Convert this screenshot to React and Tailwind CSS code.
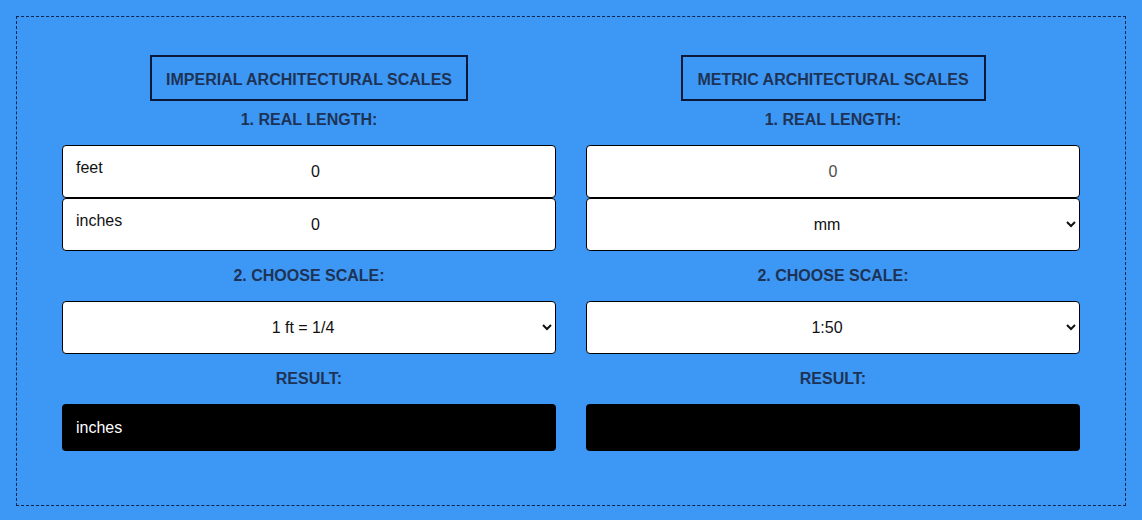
import React from "react";

const font = { fontFamily: '"Liberation Sans", Arial, sans-serif' };

function Heading({ children, className = "" }) {
  return (
    <div className={"text-[16px] leading-[18px] font-bold text-[#1d3355] text-center " + className}>
      {children}
    </div>
  );
}

function LabeledInput({ label, value }) {
  return (
    <div className="relative w-full h-[53px] bg-white border border-black rounded-[4px]">
      <span className="absolute left-[13px] top-[13px] text-[16px] leading-[18px] text-[#111]">{label}</span>
      <input
        readOnly
        value={value}
        className="w-full h-full pl-[13px] text-center text-[16px] text-[#111] outline-none bg-transparent"
      />
    </div>
  );
}

function Select({ options }) {
  return (
    <select
      defaultValue={options[0]}
      className="w-full h-[53px] bg-white border border-black rounded-[4px] text-[16px] text-[#111] text-center [text-align-last:center] px-2 outline-none"
    >
      {options.map((o) => (
        <option key={o}>{o}</option>
      ))}
    </select>
  );
}

function Column({ title, titleClass, children, result }) {
  return (
    <div className="flex flex-col items-center w-[494px]">
      <div className={"h-[46px] pt-[3px] border-2 border-[#0b1838] flex items-center justify-center text-[16px] font-bold text-[#1d3355] " + titleClass}>
        {title}
      </div>
      <Heading className="mt-[10px] mb-[16px]">1. REAL LENGTH:</Heading>
      {children[0]}
      <Heading className="mt-[16px] mb-[16px]">2. CHOOSE SCALE:</Heading>
      {children[1]}
      <Heading className="mt-[16px] mb-[16px]">RESULT:</Heading>
      <div className="w-full h-[47px] bg-black rounded-[4px] flex items-center px-[14px] text-white text-[16px]">
        {result}
      </div>
    </div>
  );
}

export default function App() {
  return (
    <div className="w-[1142px] h-[520px] bg-[#3d97f5] p-4" style={font}>
      <div className="h-[490px] border border-dashed border-[#0d2650] pt-[38px] px-[45px] flex justify-between">
        <Column title="IMPERIAL ARCHITECTURAL SCALES" titleClass="w-[318px]" result="inches">
          <div className="w-full flex flex-col">
            <LabeledInput label="feet" value="0" />
            <LabeledInput label="inches" value="0" />
          </div>
          <Select options={["1 ft = 1/4", "1 ft = 1/8", "1 ft = 1/2"]} />
        </Column>
        <Column title="METRIC ARCHITECTURAL SCALES" titleClass="w-[305px]" result="">
          <div className="w-full flex flex-col">
            <div className="w-full h-[53px] bg-white border border-black rounded-[4px]">
              <input
                placeholder="0"
                className="w-full h-full text-center text-[16px] text-[#111] placeholder:text-[#4d4d4d] outline-none bg-transparent"
              />
            </div>
            <Select options={["mm", "cm", "m"]} />
          </div>
          <Select options={["1:50", "1:100", "1:200"]} />
        </Column>
      </div>
    </div>
  );
}
